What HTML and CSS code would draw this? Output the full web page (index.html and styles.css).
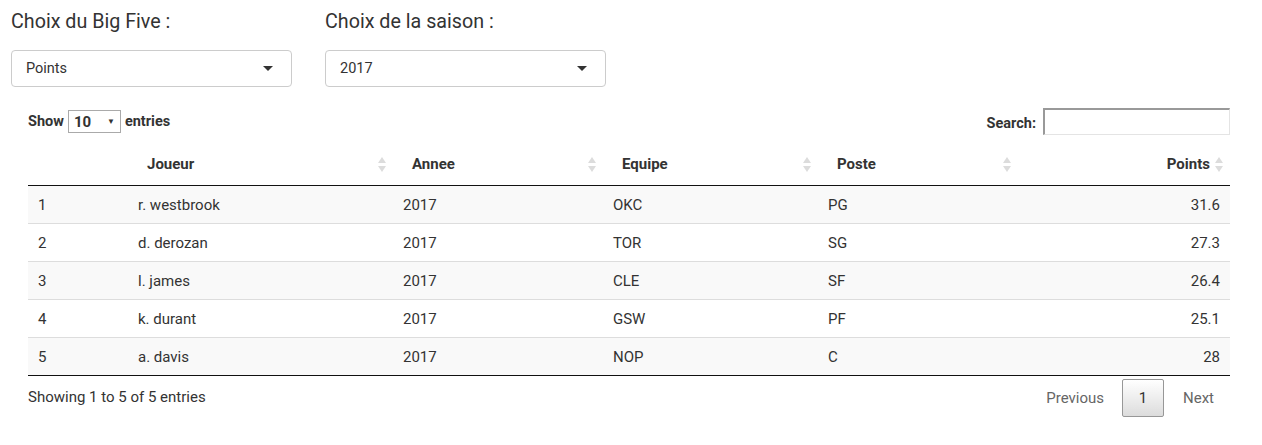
FILE: index.html
```html
<!DOCTYPE html>
<html lang="fr">
<head>
<meta charset="utf-8">
<title>Big Five</title>
<link rel="stylesheet" href="styles.css">
</head>
<body>
<div class="page">
  <div class="controls">
    <div class="form-group">
      <label class="control-label">Choix du Big Five :</label>
      <div class="select-box"><span>Points</span><span class="caret"></span></div>
    </div>
    <div class="form-group">
      <label class="control-label">Choix de la saison :</label>
      <div class="select-box"><span>2017</span><span class="caret"></span></div>
    </div>
  </div>

  <div class="dt-wrapper">
    <div class="dt-top">
      <div class="dt-length">Show <span class="len-select">10<span class="len-arrow">▼</span></span> entries</div>
      <div class="dt-search">Search: <span class="search-input"></span></div>
    </div>
    <table class="dt">
      <colgroup>
        <col class="c1"><col class="c2"><col class="c3"><col class="c4"><col class="c5"><col class="c6">
      </colgroup>
      <thead>
        <tr>
          <th class="nosort"></th>
          <th>Joueur</th>
          <th>Annee</th>
          <th>Equipe</th>
          <th>Poste</th>
          <th class="num">Points</th>
        </tr>
      </thead>
      <tbody>
        <tr class="odd"><td>1</td><td>r. westbrook</td><td>2017</td><td>OKC</td><td>PG</td><td class="num">31.6</td></tr>
        <tr><td>2</td><td>d. derozan</td><td>2017</td><td>TOR</td><td>SG</td><td class="num">27.3</td></tr>
        <tr class="odd"><td>3</td><td>l. james</td><td>2017</td><td>CLE</td><td>SF</td><td class="num">26.4</td></tr>
        <tr><td>4</td><td>k. durant</td><td>2017</td><td>GSW</td><td>PF</td><td class="num">25.1</td></tr>
        <tr class="odd"><td>5</td><td>a. davis</td><td>2017</td><td>NOP</td><td>C</td><td class="num">28</td></tr>
      </tbody>
    </table>
    <div class="dt-bottom">
      <div class="dt-info">Showing 1 to 5 of 5 entries</div>
      <div class="dt-paginate">
        <span class="pg-link">Previous</span>
        <span class="pg-current">1</span>
        <span class="pg-link">Next</span>
      </div>
    </div>
  </div>
</div>
</body>
</html>
```
FILE: styles.css
```css
html, body {
  margin: 0;
  padding: 0;
  background: #fff;
}
body {
  font-family: Roboto, "Liberation Sans", Arial, sans-serif;
  color: #333;
  font-size: 15px;
}
.page {
  padding: 0 32px 0 11px;
}
.controls {
  display: flex;
  gap: 33px;
}
.form-group {
  width: 281px;
  display: flex;
  flex-direction: column;
}
.control-label {
  font-size: 19.7px;
  font-weight: 400;
  line-height: 24px;
  padding-top: 10px;
  margin-bottom: 16px;
  color: #333;
}
.select-box {
  height: 35px;
  border: 1px solid #ccc;
  border-radius: 4px;
  display: flex;
  align-items: center;
  justify-content: space-between;
  padding: 0 18px 0 14px;
  font-size: 14.5px;
  color: #333;
}
.caret {
  width: 0;
  height: 0;
  border-left: 5px solid transparent;
  border-right: 5px solid transparent;
  border-top: 5px solid #333;
}
.dt-wrapper {
  margin: 21px 0 0 17px;
}
.dt-top {
  display: flex;
  justify-content: space-between;
  align-items: flex-start;
  font-weight: 700;
  font-size: 14.5px;
}
.dt-length {
  display: flex;
  align-items: center;
  gap: 3px;
  padding-top: 2px;
}
.len-select {
  display: inline-flex;
  align-items: center;
  justify-content: space-between;
  width: 41px;
  height: 21px;
  padding: 0 5px;
  border: 1px solid #aaa;
  font-size: 15px;
  margin: 0 1px;
}
.len-arrow {
  font-size: 8px;
  color: #333;
}
.dt-search {
  display: flex;
  align-items: center;
  gap: 7px;
  padding-top: 3px;
}
.search-input {
  display: block;
  width: 184px;
  height: 24px;
  border-style: solid;
  border-width: 2px 1px 1px 2px;
  border-color: #999 #e4e4e4 #e4e4e4 #999;
  margin-top: -3px;
}
table.dt {
  width: 1202px;
  table-layout: fixed;
  border-collapse: collapse;
  margin-top: 8px;
}
col.c1 { width: 100px; }
col.c2 { width: 265px; }
col.c3 { width: 210px; }
col.c4 { width: 215px; }
col.c5 { width: 200px; }
col.c6 { width: 212px; }
thead th {
  position: relative;
  text-align: left;
  font-weight: 700;
  padding: 10px 18px 10px 19px;
  line-height: 22px;
  border-bottom: 1px solid #111;
}
thead th.num {
  text-align: right;
  padding-right: 20px;
}
thead th::before,
thead th::after {
  content: "";
  position: absolute;
  right: 7px;
  width: 0;
  height: 0;
  border-left: 4px solid transparent;
  border-right: 4px solid transparent;
}
thead th::before {
  top: 14px;
  border-bottom: 6px solid #dcdcdc;
}
thead th::after {
  top: 23px;
  border-top: 6px solid #dcdcdc;
}
thead th.nosort::before,
thead th.nosort::after {
  display: none;
}
tbody td {
  padding: 9px 10px 7px;
  line-height: 21px;
  border-top: 1px solid #ddd;
}
tbody tr:first-child td {
  border-top: none;
}
tbody tr:last-child td {
  border-bottom: 1px solid #111;
}
tbody tr.odd {
  background: #f9f9f9;
}
td.num {
  text-align: right;
}
.dt-bottom {
  display: flex;
  justify-content: space-between;
  align-items: flex-start;
  width: 1202px;
}
.dt-info {
  padding-top: 12px;
}
.dt-paginate {
  display: flex;
  align-items: center;
  padding-top: 3px;
}
.pg-link {
  color: #666;
  padding: 0 18px 0 0;
}
.pg-link:last-child {
  padding-right: 16px;
}
.pg-current {
  box-sizing: border-box;
  width: 42px;
  height: 38px;
  display: flex;
  align-items: center;
  justify-content: center;
  border: 1px solid #979797;
  border-radius: 2px;
  background: linear-gradient(to bottom, #fff 0%, #dcdcdc 100%);
  color: #333;
  margin-right: 19px;
}
```
